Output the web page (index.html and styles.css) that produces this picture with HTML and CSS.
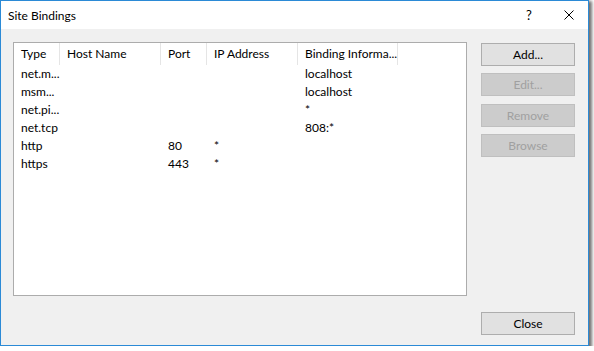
FILE: index.html
```html
<!DOCTYPE html>
<html>
<head>
<meta charset="utf-8">
<link rel="stylesheet" href="styles.css">
</head>
<body>
<div class="window">
  <div class="titlebar">
    <span class="title">Site Bindings</span>
    <span class="help">?</span>
    <span class="close-x"><svg width="10" height="10" viewBox="0 0 10 10"><path d="M0.5 0.5 L9.5 9.5 M9.5 0.5 L0.5 9.5" stroke="#000" stroke-width="1" fill="none"/></svg></span>
  </div>
  <div class="content">
    <div class="list">
      <div class="grid">
        <div class="hd">Type</div><div class="hd">Host Name</div><div class="hd">Port</div><div class="hd">IP Address</div><div class="hd">Binding Informa...</div><div class="hd-rest"></div>
        <div class="c">net.m...</div><div class="c"></div><div class="c"></div><div class="c"></div><div class="c">localhost</div><div class="c"></div>
        <div class="c">msm...</div><div class="c"></div><div class="c"></div><div class="c"></div><div class="c">localhost</div><div class="c"></div>
        <div class="c">net.pi...</div><div class="c"></div><div class="c"></div><div class="c"></div><div class="c">*</div><div class="c"></div>
        <div class="c">net.tcp</div><div class="c"></div><div class="c"></div><div class="c"></div><div class="c">808:*</div><div class="c"></div>
        <div class="c">http</div><div class="c"></div><div class="c">80</div><div class="c">*</div><div class="c"></div><div class="c"></div>
        <div class="c">https</div><div class="c"></div><div class="c">443</div><div class="c">*</div><div class="c"></div><div class="c"></div>
      </div>
    </div>
    <div class="side">
      <div class="btn">Add...</div>
      <div class="btn disabled">Edit...</div>
      <div class="btn disabled">Remove</div>
      <div class="btn disabled">Browse</div>
      <div class="btn bottom">Close</div>
    </div>
  </div>
</div>
</body>
</html>
```
FILE: styles.css
```css
* { box-sizing: border-box; }
html, body { margin: 0; padding: 0; background: #ffffff; }
body {
  font-family: Lato, "Noto Sans", sans-serif;
  font-size: 12px;
  color: #000;
}
.window {
  width: 589px;
  height: 346px;
  border: 1px solid #2b8ad6;
  background: #f0f0f0;
  box-shadow: 2px 2px 3px 1px rgba(0,0,0,0.55);
  display: flex;
  flex-direction: column;
}
.titlebar {
  height: 28px;
  background: #fff;
  display: flex;
  align-items: center;
  padding-left: 7px;
  flex: none;
}
.title { flex: 1; font-size: 12px; }
.help { width: 14px; margin-right: 24px; font-size: 13px; }
.close-x { display: flex; margin-right: 14px; }
.content {
  flex: 1;
  display: flex;
  padding: 13px 12px 10px 12px;
}
.list {
  width: 454px;
  height: 254px;
  background: #fff;
  border: 1px solid #acacac;
}
.grid {
  display: grid;
  grid-template-columns: 46px 101px 46px 91px 100px 1fr;
  grid-auto-rows: 18px;
  grid-template-rows: 22px;
}
.hd {
  border-right: 1px solid #e5e5e5;
  padding-left: 7px;
  line-height: 22px;
  white-space: nowrap;
}
.c {
  padding-left: 7px;
  line-height: 18px;
  white-space: nowrap;
}
.side {
  margin-left: 14px;
  padding-top: 1px;
  display: flex;
  flex-direction: column;
  gap: 7.4px;
  width: 94px;
}
.btn {
  height: 23px;
  background: #e1e1e1;
  border: 1px solid #adadad;
  text-align: center;
  line-height: 21px;
}
.btn.disabled {
  background: #cccccc;
  border-color: #bfbfbf;
  color: #a0a0a0;
}
.btn.bottom { margin-top: auto; }
```
